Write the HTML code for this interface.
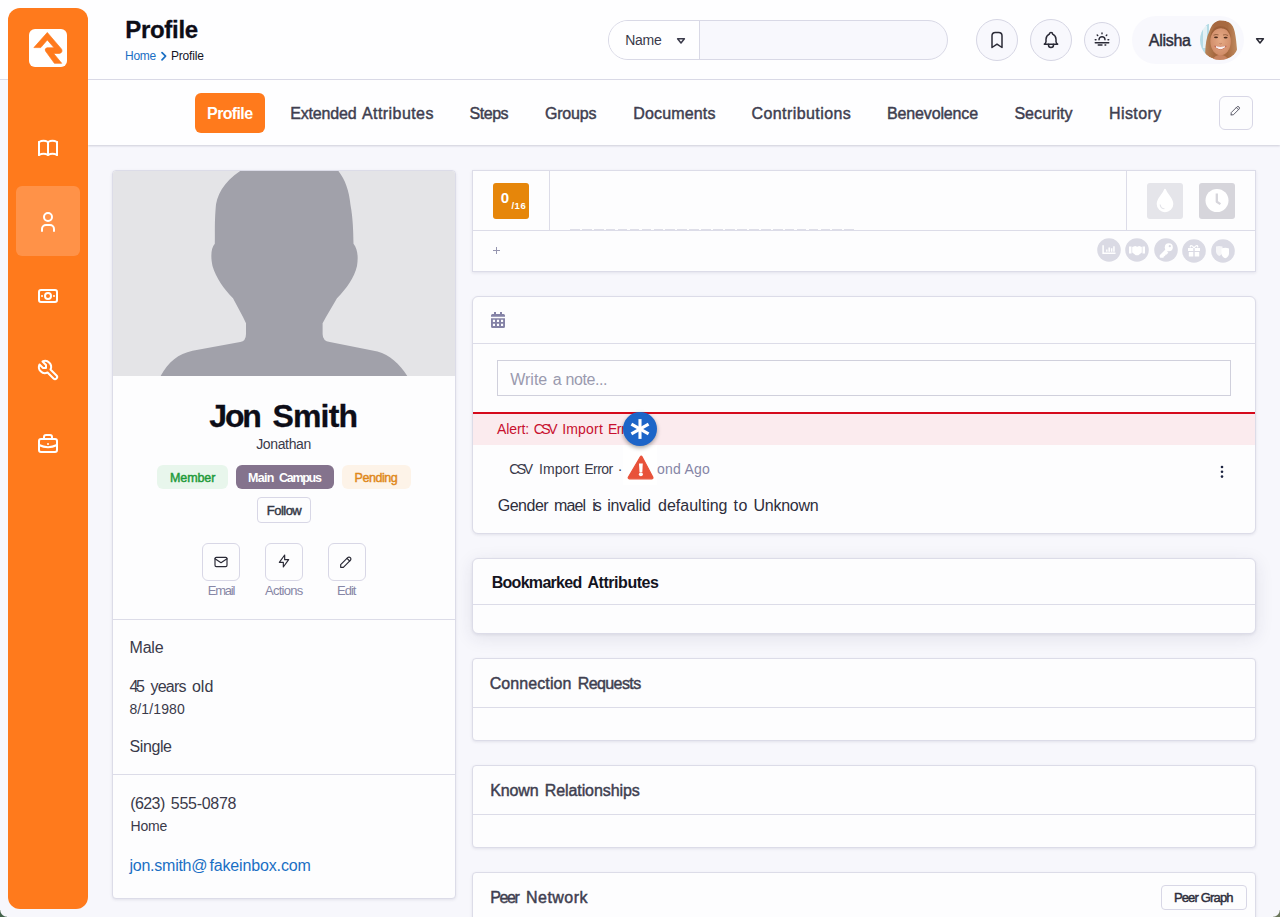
<!DOCTYPE html>
<html lang="en"><head><meta charset="utf-8"><title>Profile</title>
<style>
*{box-sizing:border-box;margin:0;padding:0}
html,body{width:1280px;height:917px;overflow:hidden}
body{position:relative;background:#f7f7fc;font-family:"Liberation Sans",sans-serif;color:#14141f}
.t{position:absolute;white-space:nowrap;display:block}
.w{display:inline-block;position:relative;width:0;white-space:pre;vertical-align:top}
.a{position:absolute}
.card{position:absolute;background:#fdfdfe;border:1px solid #dcdce8;box-shadow:0 1px 3px rgba(40,40,80,.10)}
.hl{position:absolute;height:1px;background:#dcdce8}
.vl{position:absolute;width:1px;background:#dcdce8}
svg{position:absolute;overflow:visible}
.ic{fill:none;stroke:#fff;stroke-width:2;stroke-linecap:round;stroke-linejoin:round}
.circ{position:absolute;border-radius:50%;border:1px solid #d6d6e4;background:#f8f8fd}
.sq{position:absolute;border:1px solid #d8d7e6;background:#fdfdfe}
</style></head>
<body>
<div class="a" style="left:0;top:0;width:1280px;height:80px;background:#fefeff;border-bottom:1px solid #dcdce8"></div>
<div class="a" style="left:88px;top:80px;width:1192px;height:65px;background:#fefeff;box-shadow:0 1px 2px rgba(40,40,80,.20)"></div>
<div class="a" style="left:8px;top:8px;width:80px;height:901px;background:#ff7a1c;border-radius:12px"></div>
<div class="a" style="left:29px;top:29px;width:38px;height:38px;background:#fff;border-radius:6px"></div>
<svg style="left:24px;top:24px" width="48" height="48" viewBox="0 0 48 48"><path fill="#ff7a1c" stroke="#ff7a1c" stroke-width=".7" stroke-linejoin="round" d="M23.3 8.5 L9.9 23.6 L16.75 23.6 L23.3 15.9 L30.1 23.8 L23 23.8 Q20.3 24.6 21.5 27 L30.4 39.3 L37.7 39.3 L29.6 29.4 L35.4 29.4 Q39 28.6 37.6 25.2 Z"/></svg>
<div class="a" style="left:16px;top:186px;width:64px;height:70px;background:#ff9248;border-radius:6px"></div>
<svg style="left:36px;top:135.7px" width="24" height="24" viewBox="0 0 24 24" class="ic" ><path d="M3 19a9 9 0 0 1 9 0a9 9 0 0 1 9 0"/><path d="M3 6a9 9 0 0 1 9 0a9 9 0 0 1 9 0"/><path d="M3 6v13M12 6v13M21 6v13"/></svg>
<svg style="left:36px;top:209.6px" width="24" height="24" viewBox="0 0 24 24" class="ic" ><path d="M8 7a4 4 0 1 0 8 0a4 4 0 0 0 -8 0"/><path d="M6 21v-2a4 4 0 0 1 4 -4h4a4 4 0 0 1 4 4v2"/></svg>
<svg style="left:36px;top:283.5px" width="24" height="24" viewBox="0 0 24 24" class="ic" ><path d="M9 12a3 3 0 1 0 6 0a3 3 0 0 0 -6 0"/><path d="M3 8a2 2 0 0 1 2 -2h14a2 2 0 0 1 2 2v8a2 2 0 0 1 -2 2h-14a2 2 0 0 1 -2 -2z"/><path d="M18 12h.01M6 12h.01"/></svg>
<svg style="left:36px;top:357.5px" width="24" height="24" viewBox="0 0 24 24" class="ic" ><path d="M7 10h3v-3l-3.5 -3.5a6 6 0 0 1 8 8l6 6a2 2 0 0 1 -3 3l-6 -6a6 6 0 0 1 -8 -8l3.5 3.5"/></svg>
<svg style="left:36px;top:431.5px" width="24" height="24" viewBox="0 0 24 24" class="ic" ><path d="M3 9a2 2 0 0 1 2 -2h14a2 2 0 0 1 2 2v9a2 2 0 0 1 -2 2h-14a2 2 0 0 1 -2 -2z"/><path d="M8 7v-2a2 2 0 0 1 2 -2h4a2 2 0 0 1 2 2v2"/><path d="M12 12v.01"/><path d="M3 13a20 20 0 0 0 18 0"/></svg>
<span class="t" style="left:125.25px;top:17.98px;font-size:24px;line-height:24px;color:#0d0d17;letter-spacing:-0.306px;font-weight:700;-webkit-text-stroke:0.3px currentColor;">Profile</span><span class="t" style="left:125.00px;top:50.14px;font-size:12px;line-height:12px;color:#1a6fc4;letter-spacing:-0.250px;">Home</span><svg style="left:160px;top:50px" width="8" height="12" viewBox="0 0 8 12"><path d="M2 2.6l3.6 3.6l-3.6 3.6" fill="none" stroke="#1a6fc4" stroke-width="1.7" stroke-linecap="round" stroke-linejoin="round"/></svg><span class="t" style="left:170.90px;top:50.14px;font-size:12px;line-height:12px;color:#14141f;letter-spacing:-0.150px;">Profile</span>
<div class="a" style="left:608px;top:20px;width:340px;height:40px;border:1px solid #d9d9e6;border-radius:20px;background:#f8f8fd;overflow:hidden"><div style="position:absolute;left:0;top:0;width:91px;height:38px;background:#fefeff;border-right:1px solid #d9d9e6"></div></div>
<span class="t" style="left:625.30px;top:33.45px;font-size:14px;line-height:14px;color:#3a3a4a;letter-spacing:-0.325px;">Name</span><svg style="left:676px;top:36.5px" width="10" height="8" viewBox="0 0 10 8"><path d="M1.6 1.8h6.8l-3.4 4.2z" fill="none" stroke="#3a3a4a" stroke-width="1.5" stroke-linejoin="round"/></svg>
<div class="circ" style="left:976px;top:19px;width:42px;height:42px"></div><div class="circ" style="left:1030px;top:19px;width:42px;height:42px"></div><div class="circ" style="left:1084px;top:21.5px;width:36px;height:36px"></div>
<svg style="left:987px;top:30px" width="20" height="20" viewBox="0 0 24 24" fill="none" stroke="#2a2a36" stroke-width="1.8" stroke-linecap="round" stroke-linejoin="round"><path d="M18 7v14l-6 -4l-6 4v-14a4 4 0 0 1 4 -4h4a4 4 0 0 1 4 4z"/></svg><svg style="left:1041px;top:30px" width="20" height="20" viewBox="0 0 24 24" fill="none" stroke="#2a2a36" stroke-width="1.8" stroke-linecap="round" stroke-linejoin="round"><path d="M10 5a2 2 0 1 1 4 0a7 7 0 0 1 4 6v3a4 4 0 0 0 2 3h-16a4 4 0 0 0 2 -3v-3a7 7 0 0 1 4 -6"/><path d="M9 17v1a3 3 0 0 0 6 0v-1"/></svg><svg style="left:1093px;top:29.85px" width="18" height="18" viewBox="0 0 24 24" fill="none" stroke="#2a2a36" stroke-width="1.9" stroke-linecap="round" stroke-linejoin="round"><path d="M3 13h1M20 13h1M5.600 6.600l.7 .7M18.400 6.600l-.7 .7M8 13a4 4 0 1 1 8 0M3 17h18M7 20h5M16 20h1M12 5v-1"/></svg>
<div class="a" style="left:1132px;top:16px;width:112px;height:48px;border-radius:24px;background:#f8f8fd"></div><span class="t" style="left:1148.75px;top:32.76px;font-size:16px;line-height:16px;color:#2e2e3c;letter-spacing:-0.275px;-webkit-text-stroke:0.45px currentColor;">Alisha</span><svg style="left:1200px;top:20px" width="40" height="40" viewBox="0 0 40 40"><defs><clipPath id="av"><circle cx="20" cy="20" r="20"/></clipPath><filter id="bl" x="-10%" y="-10%" width="120%" height="120%"><feGaussianBlur stdDeviation="0.55"/></filter><linearGradient id="hg" x1="0" x2="1" y1="0" y2="0"><stop offset="0" stop-color="#b98458"/><stop offset=".3" stop-color="#a5683f"/><stop offset=".7" stop-color="#a86a40"/><stop offset="1" stop-color="#c08c60"/></linearGradient><radialGradient id="fg" cx=".5" cy=".45" r=".6"><stop offset="0" stop-color="#e6aa86"/><stop offset="1" stop-color="#cf8a66"/></radialGradient></defs><g clip-path="url(#av)"><rect width="40" height="40" fill="#f6fafc"/><g filter="url(#bl)"><rect x="-2" y="4" width="11" height="30" fill="#b5dbe6"/><rect x="3" y="6" width="4" height="22" fill="#e4f1f5"/><path d="M5.200 33C5.500 24 6.500 17 9.200 11.800C11 6 13.500 3 15.700 2C18 .6 19.500 .4 21 .5C24 .4 27 1 29.500 2.600C32.500 5 33.800 8 34.700 11.800C36 18 36.500 24 37 29.500C36 33 34.500 35.500 32 37.300L21 41L11.800 38C9 37 6.500 35.500 5.200 33z" fill="url(#hg)"/><path d="M12.500 40C13.500 36.500 17 35 20.500 35C24 35 27 36.500 28.500 40z" fill="#c88462"/><ellipse cx="20.600" cy="21.300" rx="10.200" ry="14" fill="url(#fg)"/><path d="M10.300 18C10.500 12 13.500 8 18 6.500C24 5.500 30 8 31 18C29.800 12.500 27.500 9 22 8.400C16.500 7.800 12 11.500 10.300 18z" fill="#9c5f38"/><path d="M14.800 26.200Q20.300 32 26 26.200Q20.300 28.200 14.800 26.200z" fill="#c2695a" stroke="#c2695a" stroke-width="1.200" stroke-linejoin="round"/><path d="M16 26.800Q20.300 30.600 24.800 26.800Q20.300 27.800 16 26.800z" fill="#fff" stroke="#fff" stroke-width=".9"/><ellipse cx="16" cy="17.300" rx="2" ry=".9" fill="#4a2c1c"/><ellipse cx="25.600" cy="17.600" rx="2" ry=".9" fill="#4a2c1c"/><path d="M13.500 15.200q2.500 -1.300 5 -.3M23 15q2.500 -1 5 .5" stroke="#7a4a2c" stroke-width=".7" fill="none"/><path d="M19.500 23.500q1 .8 2.200 0" stroke="#b87454" stroke-width=".8" fill="none"/></g></g></svg>
<svg style="left:1255px;top:36.5px" width="10" height="8" viewBox="0 0 10 8"><path d="M1.6 1.8h6.8l-3.4 4.2z" fill="none" stroke="#2a2a36" stroke-width="1.5" stroke-linejoin="round"/></svg>
<div class="a" style="left:195px;top:93px;width:70px;height:40px;border-radius:6px;background:#ff7a1c"></div><span class="t" style="left:207.10px;top:105.76px;font-size:16px;line-height:16px;color:#fff;letter-spacing:-0.635px;font-weight:700;">Profile</span><span class="t" style="left:0;top:105.76px;font-size:16px;line-height:16px;color:#3f3f50;-webkit-text-stroke:0.45px currentColor;"><span class="w" style="left:290.20px;letter-spacing:-0.175px">Extended </span><span class="w" style="left:362.00px;letter-spacing:0.426px">Attributes</span></span><span class="t" style="left:469.60px;top:105.76px;font-size:16px;line-height:16px;color:#3f3f50;letter-spacing:-0.484px;-webkit-text-stroke:0.45px currentColor;">Steps</span><span class="t" style="left:544.90px;top:105.76px;font-size:16px;line-height:16px;color:#3f3f50;letter-spacing:-0.180px;-webkit-text-stroke:0.45px currentColor;">Groups</span><span class="t" style="left:633.25px;top:105.76px;font-size:16px;line-height:16px;color:#3f3f50;letter-spacing:0.164px;-webkit-text-stroke:0.45px currentColor;">Documents</span><span class="t" style="left:751.50px;top:105.76px;font-size:16px;line-height:16px;color:#3f3f50;letter-spacing:0.421px;-webkit-text-stroke:0.45px currentColor;">Contributions</span><span class="t" style="left:887.10px;top:105.76px;font-size:16px;line-height:16px;color:#3f3f50;letter-spacing:-0.150px;-webkit-text-stroke:0.45px currentColor;">Benevolence</span><span class="t" style="left:1014.40px;top:105.76px;font-size:16px;line-height:16px;color:#3f3f50;letter-spacing:0.055px;-webkit-text-stroke:0.45px currentColor;">Security</span><span class="t" style="left:1108.90px;top:105.76px;font-size:16px;line-height:16px;color:#3f3f50;letter-spacing:0.448px;-webkit-text-stroke:0.45px currentColor;">History</span>
<div class="sq" style="left:1219px;top:96px;width:34px;height:34px;border-radius:6px"></div><svg style="left:1228.6px;top:104.300px" width="13" height="13" viewBox="0 0 24 24" fill="none" stroke="#5c5c6a" stroke-width="1.800" stroke-linecap="round" stroke-linejoin="round"><path d="M4 20h4l10.500 -10.500a2.828 2.828 0 1 0 -4 -4l-10.500 10.500v4"/><path d="M13.500 6.500l4 4"/></svg>
<div class="card" style="left:112px;top:170px;width:344px;height:729px;border-radius:4px;overflow:hidden"><div style="position:absolute;left:0;top:0;width:342px;height:205px;background:#e4e4e7"></div><svg style="left:-1px;top:-1px;overflow:hidden" width="344" height="206" viewBox="112 170 344 206"><path fill="#a1a1aa" d="M241.7 170 C224 181 216 196 215.600 209 C214.500 222 215 234 214.800 243.800 C211 248 210.500 256 212.500 266 C216 278 224 289 233 298.200 L243 317 L246 323.300 L246 334 Q246 341 240.200 342.100 L192.500 350.800 C178 354 168 362 160.100 377 L407.900 377 C400 364 390 355 377.500 351.400 L329.800 342.100 Q322.600 341 322.600 334 L322.600 323.300 L326 317 L337 298.200 C347 288 354 278 357 266 C358.500 256 357.500 249 353.500 243.800 C353.300 232 353 218 350.500 205 C349 190 345 179 337.600 170 z"/></svg></div>
<span class="t" style="left:0;top:400.21px;font-size:32px;line-height:32px;color:#0d0d17;font-weight:700;-webkit-text-stroke:0.3px currentColor;"><span class="w" style="left:209.30px;letter-spacing:-2.188px">Jon </span><span class="w" style="left:272.40px;letter-spacing:-0.794px">Smith</span></span><span class="t" style="left:256.20px;top:437.45px;font-size:14px;line-height:14px;color:#3a3a4a;letter-spacing:-0.361px;">Jonathan</span><div class="a" style="left:157px;top:465px;width:71px;height:24px;border-radius:6px;background:#e8f6ec"></div><div class="a" style="left:236px;top:465px;width:98px;height:24px;border-radius:6px;background:#84738d"></div><div class="a" style="left:342px;top:465px;width:69px;height:24px;border-radius:6px;background:#fdf3e8"></div>
<span class="t" style="left:170.00px;top:471.72px;font-size:12.5px;line-height:12.5px;color:#1f9a3a;letter-spacing:-0.095px;-webkit-text-stroke:0.45px currentColor;">Member</span><span class="t" style="left:0;top:471.72px;font-size:12.5px;line-height:12.5px;color:#fff;font-weight:700;"><span class="w" style="left:248.10px;letter-spacing:-0.733px">Main </span><span class="w" style="left:279.10px;letter-spacing:-1.303px">Campus</span></span><span class="t" style="left:354.60px;top:471.72px;font-size:12.5px;line-height:12.5px;color:#e0881a;letter-spacing:-0.446px;-webkit-text-stroke:0.45px currentColor;">Pending</span><div class="sq" style="left:257px;top:497px;width:54px;height:25.500px;border-radius:4px"></div><span class="t" style="left:266.80px;top:504.30px;font-size:13px;line-height:13px;color:#343846;letter-spacing:-0.525px;-webkit-text-stroke:0.45px currentColor;">Follow</span><div class="sq" style="left:202px;top:543px;width:38px;height:38px;border-radius:6px"></div><div class="sq" style="left:265px;top:543px;width:38px;height:38px;border-radius:6px"></div><div class="sq" style="left:328px;top:543px;width:38px;height:38px;border-radius:6px"></div>
<svg style="left:213.300px;top:553.500px" width="16" height="16" viewBox="0 0 24 24" fill="none" stroke="#2a2a36" stroke-width="1.750" stroke-linecap="round" stroke-linejoin="round"><path d="M3 7a2 2 0 0 1 2 -2h14a2 2 0 0 1 2 2v10a2 2 0 0 1 -2 2h-14a2 2 0 0 1 -2 -2v-10z"/><path d="M3 7l9 6l9 -6"/></svg><svg style="left:275.700px;top:553.300px" width="16" height="16" viewBox="0 0 24 24" fill="none" stroke="#2a2a36" stroke-width="1.750" stroke-linecap="round" stroke-linejoin="round"><path d="M13 3l0 7l6 0l-8 11l0 -7l-6 0l8 -11"/></svg><svg style="left:338.400px;top:553.500px" width="16" height="16" viewBox="0 0 24 24" fill="none" stroke="#2a2a36" stroke-width="1.750" stroke-linecap="round" stroke-linejoin="round"><path d="M4 20h4l10.500 -10.500a2.828 2.828 0 1 0 -4 -4l-10.500 10.500v4"/><path d="M13.500 6.500l4 4"/></svg>
<span class="t" style="left:207.80px;top:584.30px;font-size:13px;line-height:13px;color:#8787a6;letter-spacing:-1.250px;">Email</span><span class="t" style="left:265.10px;top:584.30px;font-size:13px;line-height:13px;color:#8787a6;letter-spacing:-0.754px;">Actions</span><span class="t" style="left:337.00px;top:584.30px;font-size:13px;line-height:13px;color:#8787a6;letter-spacing:-0.992px;">Edit</span><div class="hl" style="left:113px;top:619px;width:342px"></div><div class="hl" style="left:113px;top:774px;width:342px"></div>
<span class="t" style="left:129.50px;top:639.76px;font-size:16px;line-height:16px;color:#3a3a4a;letter-spacing:-0.196px;">Male</span><span class="t" style="left:0;top:678.76px;font-size:16px;line-height:16px;color:#3a3a4a;"><span class="w" style="left:129.40px;letter-spacing:-2.213px">45 </span><span class="w" style="left:150.50px;letter-spacing:-0.806px">years </span><span class="w" style="left:191.90px;letter-spacing:0.062px">old</span></span><span class="t" style="left:129.40px;top:702.45px;font-size:14px;line-height:14px;color:#3a3a4a;letter-spacing:0.129px;">8/1/1980</span><span class="t" style="left:129.50px;top:738.76px;font-size:16px;line-height:16px;color:#3a3a4a;letter-spacing:-0.400px;">Single</span><span class="t" style="left:0;top:795.76px;font-size:16px;line-height:16px;color:#3a3a4a;"><span class="w" style="left:130.20px;letter-spacing:-0.569px">(623) </span><span class="w" style="left:170.80px;letter-spacing:-0.289px">555-0878</span></span><span class="t" style="left:130.60px;top:819.45px;font-size:14px;line-height:14px;color:#3a3a4a;letter-spacing:-0.258px;">Home</span><span class="t" style="left:0;top:857.76px;font-size:16px;line-height:16px;color:#1a6fc4;"><span class="w" style="left:129.54px;letter-spacing:-0.254px">jon.smith@</span><span class="w" style="left:209.40px;letter-spacing:-0.141px">fakeinbox.com</span></span>
<div class="card" style="left:472px;top:170px;width:784px;height:101.500px;border-radius:0"></div><div class="hl" style="left:473px;top:230px;width:782px"></div><div class="vl" style="left:549px;top:171px;height:59px"></div><div class="vl" style="left:1126px;top:171px;height:59px"></div>
<div class="a" style="left:493px;top:183px;width:36px;height:36px;border-radius:3px;background:#e6860a"></div><span class="t" style="left:500.70px;top:189.60px;font-size:15px;line-height:15px;color:#fff;font-weight:700;">0</span><span class="t" style="left:511.40px;top:201.26px;font-size:9.5px;line-height:9.5px;color:#fff;letter-spacing:0.556px;font-weight:700;">/16</span><div class="a" style="left:570px;top:228.500px;width:284.500px;height:1px;background:repeating-linear-gradient(90deg,#dedee8 0,#dedee8 9.700px,transparent 9.700px,transparent 11.930px)"></div><svg style="left:492px;top:246px" width="9" height="9" viewBox="0 0 9 9"><path d="M4.500 1v7M1 4.500h7" stroke="#9696b0" stroke-width="1" fill="none"/></svg>
<div class="a" style="left:1147px;top:183px;width:36px;height:36px;border-radius:3px;background:#e5e5ea"></div><div class="a" style="left:1199px;top:183px;width:36px;height:36px;border-radius:3px;background:#d6d5db"></div><svg style="left:1147px;top:183px" width="36" height="36" viewBox="0 0 36 36"><path d="M18 6.600C16 12 10.500 15.500 10.500 21A7.500 7.500 0 0 0 25.500 21C25.500 15.500 20 12 18 6.600z" fill="#fff" stroke="#fff" stroke-width="1.600" stroke-linejoin="round"/><path d="M13.200 21.500a4.600 4.600 0 0 0 4.300 4.300" fill="none" stroke="#e5e5ea" stroke-width="1.100"/></svg><svg style="left:1199px;top:183px" width="36" height="36" viewBox="0 0 36 36"><circle cx="18" cy="17.500" r="11.500" fill="#fff"/><path d="M17.800 10.500v8.300l3.600 2.300" fill="none" stroke="#d6d5db" stroke-width="2.300" stroke-linejoin="round"/></svg>
<svg style="left:1096.6px;top:238px" width="24" height="24" viewBox="0 0 24 24"><circle cx="12" cy="12" r="11.800" fill="#dadae4"/><path d="M6.100 7.200v8.100h12.400" fill="none" stroke="#fff" stroke-width="1.500"/><path d="M9.100 11.600h1.400v2.200h-1.400zM11.400 9.500h1.700v4.300h-1.700zM14 10.300h1.400v3.500h-1.400zM16.200 8.300h1.500v5.500h-1.500z" fill="#fff"/></svg><svg style="left:1125px;top:238px" width="24" height="24" viewBox="0 0 24 24"><circle cx="12" cy="12" r="11.800" fill="#dadae4"/><path d="M4 8.500h2.500v7h-2.500zM17.500 8.500h2.500v7h-2.500zM7.200 9l3 -1l2 .8l2 -.8l2.600 1v5.500l-3.500 2.700h-2.500l-3.600 -2.700z" fill="#fff"/></svg><svg style="left:1153.5px;top:238px" width="24" height="24" viewBox="0 0 24 24"><circle cx="12" cy="12" r="11.800" fill="#dadae4"/><circle cx="14.800" cy="9.200" r="4" fill="#fff"/><path d="M12.500 11.500l-6 6l0 1.500l2.500 0l0 -1.500l1.500 0l0 -1.500l1.500 0l1.800 -1.800" fill="#fff" stroke="#fff" stroke-width="1.600" stroke-linejoin="round"/><circle cx="15.800" cy="8.200" r="1.100" fill="#dadae4"/></svg><svg style="left:1182.2px;top:238.8px" width="24" height="24" viewBox="0 0 24 24"><circle cx="12" cy="12" r="11.800" fill="#dadae4"/><path d="M6 9h5.300v3h-5.300zM12.700 9h5.300v3h-5.300zM6.800 13h4.500v4.500h-4.500zM12.700 13h4.500v4.500h-4.500z" fill="#fff"/><path d="M12 9c-2 -3.500 -4.500 -2.500 -3.500 -.5M12 9c2 -3.500 4.500 -2.500 3.500 -.5" fill="none" stroke="#fff" stroke-width="1.300"/></svg><svg style="left:1210.8px;top:238.8px" width="24" height="24" viewBox="0 0 24 24"><circle cx="12" cy="12" r="11.800" fill="#dadae4"/><path d="M5 7.500c2 -.8 4 -.8 6.500 0v5c0 2.500 -2 4 -3.200 4.500c-1.600 -.6 -3.300 -2.300 -3.300 -4.500z" fill="#fff" opacity=".75"/><path d="M10.500 9.500c2.500 -.9 5 -.9 7.500 0v5c0 2.500 -2 4.200 -3.700 4.800c-1.800 -.6 -3.800 -2.300 -3.800 -4.800z" fill="#fff"/></svg>
<div class="card" style="left:472px;top:296px;width:784px;height:237.500px;border-radius:6px"></div><div class="hl" style="left:473px;top:343px;width:782px"></div>
<svg style="left:491px;top:312px" width="14" height="16" viewBox="0 0 14 16"><path fill="#8482a6" d="M3 0h2v2h4v-2h2v2h1.500a1.500 1.500 0 0 1 1.500 1.500v1.200h-14v-1.200a1.500 1.500 0 0 1 1.500 -1.500h1.500zM0 6.200h14v8.300a1.500 1.500 0 0 1 -1.500 1.500h-11a1.500 1.500 0 0 1 -1.500 -1.500z"/><path fill="#fdfdfe" d="M1.900 7.800h2.100v2.100h-2.100zM5.950 7.800h2.100v2.100h-2.100zM10 7.800h2.100v2.100h-2.100zM1.900 11.800h2.100v2.100h-2.100zM5.950 11.800h2.100v2.100h-2.100zM10 11.800h2.100v2.100h-2.100z"/></svg><div class="a" style="left:497px;top:360px;width:734px;height:36px;border:1px solid #d0d0dc;background:#fdfdfe"></div><span class="t" style="left:0;top:371.76px;font-size:16px;line-height:16px;color:#9a9aae;"><span class="w" style="left:510.20px;letter-spacing:0.009px">Write </span><span class="w" style="left:552.80px;letter-spacing:0.000px">a </span><span class="w" style="left:565.60px;letter-spacing:-0.433px">note...</span></span>
<div class="a" style="left:473px;top:412px;width:782px;height:33px;background:#fbebee;border-top:2px solid #d50a1c"></div><span class="t" style="left:0;top:422.45px;font-size:14px;line-height:14px;color:#c8102e;"><span class="w" style="left:497.00px;letter-spacing:-0.117px">Alert: </span><span class="w" style="left:533.75px;letter-spacing:-2.531px">CSV </span><span class="w" style="left:562.20px;letter-spacing:0.182px">Import </span><span class="w" style="left:608.00px;letter-spacing:-0.556px">Error</span></span><span class="t" style="left:0;top:462.45px;font-size:14px;line-height:14px;color:#3a3a4a;"><span class="w" style="left:509.30px;letter-spacing:-2.556px">CSV </span><span class="w" style="left:538.90px;letter-spacing:0.123px">Import </span><span class="w" style="left:584.30px;letter-spacing:-0.556px">Error </span><span class="w" style="left:617.80px;letter-spacing:0.000px">·</span></span><div class="a" style="left:623px;top:445px;width:34px;height:40px;background:#fff"></div><span class="t" style="left:657.00px;top:462.45px;font-size:14px;line-height:14px;color:#8585a6;letter-spacing:0.237px;">ond Ago</span>
<div class="a" style="left:623px;top:412px;width:34px;height:34px;border-radius:50%;background:#1c65c8;box-shadow:0 2px 4px rgba(0,0,0,.35)"></div><svg style="left:628px;top:417px" width="24" height="24" viewBox="-12 -12 24 24"><g stroke="#fff" stroke-width="3.100" fill="none"><path d="M0 -9.900V9.900"/><path d="M0 -9.900V9.900" transform="rotate(60)"/><path d="M0 -9.900V9.900" transform="rotate(-60)"/></g></svg><svg style="left:626.400px;top:454px" width="30" height="26" viewBox="627 454 30 26"><path d="M641.500 456.500L629.300 477.300a1 1 0 0 0 .9 1.500h22.800a1 1 0 0 0 .9 -1.500L642.900 456.500a.8 .8 0 0 0 -1.400 0z" fill="#e8523a" stroke="#e8523a" stroke-width="1.200" stroke-linejoin="round"/><path d="M640 463.500h3.800l-.5 8.500h-2.800z" fill="#fff"/><circle cx="641.900" cy="474.300" r="2" fill="#fff"/></svg>
<svg style="left:1220px;top:465px" width="4" height="14" viewBox="0 0 4 14"><circle cx="2" cy="2" r="1.300" fill="#1c2340"/><circle cx="2" cy="6.800" r="1.300" fill="#1c2340"/><circle cx="2" cy="11.600" r="1.300" fill="#1c2340"/></svg><span class="t" style="left:0;top:497.76px;font-size:16px;line-height:16px;color:#2e2e3c;"><span class="w" style="left:497.80px;letter-spacing:-0.515px">Gender </span><span class="w" style="left:554.10px;letter-spacing:-0.896px">mael </span><span class="w" style="left:592.30px;letter-spacing:-2.162px">is </span><span class="w" style="left:607.20px;letter-spacing:-0.279px">invalid </span><span class="w" style="left:658.00px;letter-spacing:0.014px">defaulting </span><span class="w" style="left:733.40px;letter-spacing:0.725px">to </span><span class="w" style="left:753.60px;letter-spacing:-0.281px">Unknown</span></span>
<div class="card" style="left:472px;top:558px;width:784px;height:75.500px;border-radius:6px;box-shadow:0 4px 18px rgba(40,40,80,.10),0 1px 3px rgba(40,40,80,.08)"></div><div class="hl" style="left:473px;top:604px;width:782px"></div><span class="t" style="left:0;top:574.76px;font-size:16px;line-height:16px;color:#14141f;font-weight:700;"><span class="w" style="left:491.70px;letter-spacing:-0.704px">Bookmarked </span><span class="w" style="left:587.50px;letter-spacing:-0.463px">Attributes</span></span>
<div class="card" style="left:472px;top:658px;width:784px;height:83px;border-radius:4px"></div><div class="hl" style="left:473px;top:707px;width:782px"></div><span class="t" style="left:0;top:675.76px;font-size:16px;line-height:16px;color:#3f3f50;-webkit-text-stroke:0.45px currentColor;"><span class="w" style="left:489.70px;letter-spacing:0.085px">Connection </span><span class="w" style="left:577.70px;letter-spacing:-0.582px">Requests</span></span>
<div class="card" style="left:472px;top:765px;width:784px;height:82.500px;border-radius:4px"></div><div class="hl" style="left:473px;top:814px;width:782px"></div><span class="t" style="left:0;top:782.76px;font-size:16px;line-height:16px;color:#3f3f50;-webkit-text-stroke:0.45px currentColor;"><span class="w" style="left:490.20px;letter-spacing:-0.134px">Known </span><span class="w" style="left:544.80px;letter-spacing:-0.097px">Relationships</span></span>
<div class="card" style="left:472px;top:872px;width:784px;height:60px;border-radius:4px"></div><span class="t" style="left:0;top:889.76px;font-size:16px;line-height:16px;color:#3f3f50;-webkit-text-stroke:0.45px currentColor;"><span class="w" style="left:490.20px;letter-spacing:-1.404px">Peer </span><span class="w" style="left:526.10px;letter-spacing:0.442px">Network</span></span><div class="sq" style="left:1161px;top:884.500px;width:86px;height:25px;border-radius:4px"></div><span class="t" style="left:1173.90px;top:891.30px;font-size:13px;line-height:13px;color:#2e2e3c;letter-spacing:-0.843px;-webkit-text-stroke:0.45px currentColor;">Peer Graph</span>
<div class="a" style="left:0;top:910px;width:7px;height:7px;background:radial-gradient(circle at 7px 0,transparent 6.200px,#42614a 7.200px)"></div><div class="a" style="left:1273px;top:910px;width:7px;height:7px;background:radial-gradient(circle at 0 0,transparent 6.200px,#6b775b 7.200px)"></div>
</body></html>
